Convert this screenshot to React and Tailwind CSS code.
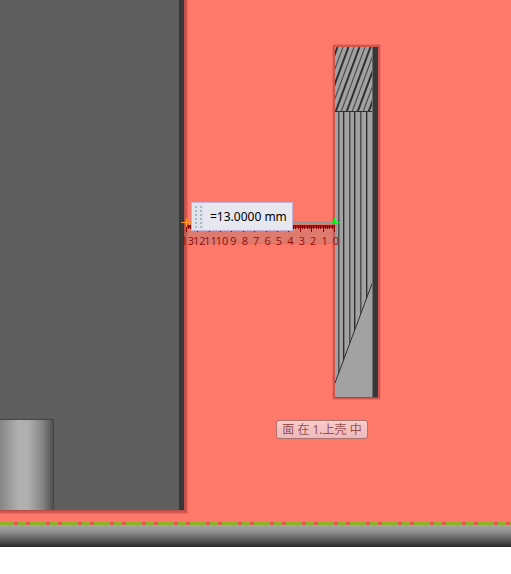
import React from 'react';

const hatches = Array.from({ length: 14 }, (_, i) => 308 + i * 5.5);
const ribs = [338, 343, 349, 354, 360, 366];
const numbers = Array.from({ length: 14 }, (_, n) => n);
const ticks = Array.from({ length: 66 }, (_, n) => n);

function Housing() {
  return (
    <g>
      <rect x="0" y="0" width="188" height="514" fill="#ed6b60" />
      <rect x="0" y="0" width="187" height="513" fill="#d3544d" />
      <rect x="0" y="0" width="185" height="511" fill="#b94d48" />
      <rect x="0" y="0" width="184" height="510" fill="#373737" />
      <rect x="0" y="0" width="179" height="510" fill="#5e5e5e" />
      <rect x="0" y="419" width="54" height="91" fill="url(#pin)" />
      <path d="M0 419.5H54" fill="none" stroke="#454545" />
      <path d="M53.5 419V510" fill="none" stroke="#454545" />
    </g>
  );
}

function Slot() {
  return (
    <g>
      <rect x="332" y="44" width="49" height="356" rx="2" fill="#ed6b60" />
      <rect x="333" y="45" width="47" height="354" rx="1" fill="#d3544d" />
      <rect x="335" y="47" width="43" height="351" fill="#a2a2a2" />
      <g clipPath="url(#slotTop)" fill="none">
        {hatches.map((x, i) => (
          <path key={x} d={`M${x} 112L${x + 24} 47`} stroke={i % 2 ? '#303030' : '#4a4a4a'} strokeWidth={i % 2 ? 2 : 1.1} />
        ))}
      </g>
      <g clipPath="url(#slotRibs)">
        {ribs.map((x, i) => (
          <g key={x}>
            <rect x={x} y="112" width="2" height="272" fill="#777777" />
            <rect x={x} y="112" width="1" height="272" fill={i % 2 ? '#2d2d2d' : '#505050'} />
          </g>
        ))}
      </g>
      <path d="M335 111.5H373M335 383L373 281" fill="none" stroke="#303030" />
      <rect x="372" y="47" width="1" height="351" fill="#6b6b6b" />
      <rect x="373" y="47" width="5" height="351" fill="#373737" />
      <path d="M335 397.5H378" stroke="#7b5b59" />
    </g>
  );
}

function Ruler() {
  return (
    <g>
      <rect x="185" y="224" width="152" height="20" fill="#808080" fillOpacity="0.25" />
      <path d="M185 222.5H336" stroke="#939393" strokeWidth="2" />
      <path d="M187 243.5H336" stroke="#b8807a" />
      <path d="M187 226.5H334" stroke="#a81c18" strokeWidth="3" />
      {ticks.map((n) => (
        <rect key={n} x={Math.round(334 - n * 2.28)} y="225" width="1" height={n % 5 ? 4 : 7} fill="#8b0000" />
      ))}
      <g fill="#980a08" fontSize="11" textAnchor="middle" className="font-['Open_Sans',sans-serif]">
        {numbers.map((n) => (
          <text key={n} x={336 - n * 11.4} y="245">{n}</text>
        ))}
      </g>
      <path d="M181 222.5H191M186.5 218V227" stroke="#ff9a20" />
      <path d="M331 222.5H340M334.5 218V223" stroke="#00ff20" />
    </g>
  );
}

function Drawing() {
  return (
    <svg className="block h-[547px] w-full" role="img" aria-label="Model view">
      <defs>
        <linearGradient id="pin">
          <stop offset="0" stopColor="#858585" />
          <stop offset=".35" stopColor="#b1b1b1" />
          <stop offset=".52" stopColor="#afafaf" />
          <stop offset=".8" stopColor="#828282" />
          <stop offset="1" stopColor="#4b4b4b" />
        </linearGradient>
        <linearGradient id="floor" x2="0" y2="1">
          <stop offset="0" stopColor="#a6a6a6" />
          <stop offset=".3" stopColor="#929292" />
          <stop offset="1" stopColor="#282828" />
        </linearGradient>
        <clipPath id="slotTop"><rect x="335" y="47" width="38" height="65" /></clipPath>
        <clipPath id="slotRibs"><path d="M335 112H373V281L335 383Z" /></clipPath>
        <pattern id="edge" y="522" width="32" height="3" patternUnits="userSpaceOnUse">
          <rect width="32" height="3" fill="#90b52b" />
          <rect y="1" width="32" height="1" fill="#1fe81f" />
          <rect x="14" width="4" height="3" fill="#dc5a50" />
          <rect x="26" width="4" height="3" fill="#dc5a50" />
        </pattern>
      </defs>
      <rect width="100%" height="525" fill="#ff796a" />
      <Housing />
      <Slot />
      <Ruler />
      <rect y="522" width="100%" height="3" fill="url(#edge)" />
      <rect y="525" width="100%" height="22" fill="url(#floor)" />
    </svg>
  );
}

export default function App() {
  return (
    <main className="relative min-h-screen overflow-hidden bg-white">
      <Drawing />
      <label className="absolute left-[191px] top-[202px] flex h-[29px] w-[102px] border border-[#c4b4d8] bg-[#e7e7ef]">
        <span className="grid w-3 shrink-0 grid-cols-[2px_2px] content-center justify-center gap-x-[3px] gap-y-0.5 bg-[#dde4ee]" aria-hidden="true">
          {Array.from({ length: 12 }, (_, i) => (
            <span key={i} className="size-0.5 bg-[#b0b6c0]" />
          ))}
        </span>
        <input
          aria-label="Distance"
          defaultValue="=13.0000 mm"
          className="min-w-0 flex-1 bg-transparent pl-1.5 font-['Noto_Sans',sans-serif] text-[12px] text-black outline-none"
        />
      </label>
      <div
        role="tooltip"
        className="absolute left-[276px] top-[420px] flex h-[19px] w-[92px] items-center justify-center whitespace-nowrap rounded-[3px] border border-[#a9736f] bg-linear-to-b from-[#fbcaca] to-[#eeb9bb] font-['Noto_Sans','Noto_Sans_CJK_SC',sans-serif] text-[12px] text-[#96504e]"
      >
        面 在 1.上壳 中
      </div>
    </main>
  );
}
